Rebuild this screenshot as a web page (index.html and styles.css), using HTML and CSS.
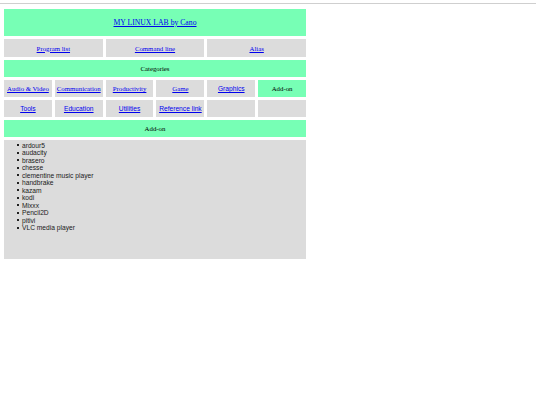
FILE: index.html
```html
<!DOCTYPE html>
<html>
<head>
<meta charset="utf-8">
<title>MY LINUX LAB by Cano</title>
<link rel="stylesheet" href="styles.css">
</head>
<body>
<div class="topline"></div>
<div class="board">
  <div class="cell green title span6"><a href="#">MY LINUX LAB by Cano</a></div>
  <div class="cell gray span2 nav"><a href="#">Program list</a></div>
  <div class="cell gray span2 nav"><a href="#">Command line</a></div>
  <div class="cell gray span2 nav"><a href="#">Alias</a></div>
  <div class="cell green span6 head">Categories</div>
  <div class="cell gray serif"><a href="#">Audio &amp; Video</a></div>
  <div class="cell gray serif"><a href="#">Communication</a></div>
  <div class="cell gray serif"><a href="#">Productivity</a></div>
  <div class="cell gray serif"><a href="#">Game</a></div>
  <div class="cell gray sans"><a href="#">Graphics</a></div>
  <div class="cell green serif">Add-on</div>
  <div class="cell gray sans"><a href="#">Tools</a></div>
  <div class="cell gray sans"><a href="#">Education</a></div>
  <div class="cell gray sans"><a href="#">Utilities</a></div>
  <div class="cell gray sans"><a href="#">Reference link</a></div>
  <div class="cell gray"></div>
  <div class="cell gray"></div>
  <div class="cell green span6 head">Add-on</div>
  <div class="content span6">
    <ul class="apps">
      <li>ardour5</li>
      <li>audacity</li>
      <li>brasero</li>
      <li>chesse</li>
      <li>clementine music player</li>
      <li>handbrake</li>
      <li>kazam</li>
      <li>kodi</li>
      <li>Mixxx</li>
      <li>Pencil2D</li>
      <li>pitivi</li>
      <li>VLC media player</li>
    </ul>
  </div>
</div>
</body>
</html>
```

FILE: styles.css
```css
html, body {
  margin: 0;
  padding: 0;
  background: #ffffff;
}

.topline {
  width: 536px;
  height: 1px;
  margin-top: 3px;
  background: #cfcfcf;
}

.board {
  margin: 5px 0 0 4px;
  width: 302px;
  display: grid;
  grid-template-columns: repeat(6, 1fr);
  grid-template-rows: 27px 18px 17px 17px 17px 17px 119px;
  gap: 3px;
  font-family: "Liberation Serif", serif;
}

.span6 { grid-column: span 6; }
.span2 { grid-column: span 2; }

.cell {
  display: flex;
  align-items: center;
  justify-content: center;
  text-align: center;
  font-size: 6.8px;
  color: #000;
  white-space: nowrap;
}

.green { background: #77ffb5; }
.gray { background: #dcdcdc; }

.title { font-size: 7.7px; }

.serif { font-family: "Liberation Serif", serif; }
.sans { font-family: "Liberation Sans", Arial, sans-serif; font-size: 6.67px; }

.cell a {
  color: #0000ee;
  text-decoration: underline;
}

.content {
  background: #dcdcdc;
}

.apps {
  margin: 0;
  padding: 1.5px 0 0 13px;
  list-style: none;
  font-family: "Liberation Sans", Arial, sans-serif;
  font-size: 6.67px;
  line-height: 7.5px;
  color: #1a1a1a;
}

.apps li::before {
  content: "";
  display: inline-block;
  width: 2px;
  height: 2px;
  margin: 0 3px 0 0;
  background: #222;
  vertical-align: 1.5px;
}
```
